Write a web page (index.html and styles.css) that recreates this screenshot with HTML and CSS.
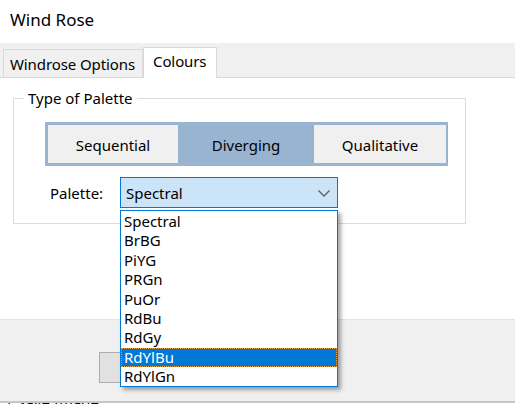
FILE: index.html
```html
<!DOCTYPE html>
<html>
<head>
<meta charset="utf-8">
<link rel="stylesheet" href="styles.css">
</head>
<body>
<div class="window">
  <div class="titlebar">Wind Rose</div>
  <div class="tabstrip">
    <div class="tab">Windrose Options</div>
    <div class="tab active">Colours</div>
  </div>
  <div class="page">
    <fieldset class="group">
      <legend class="legend">Type of Palette</legend>
      <div class="segments">
        <div class="seg">Sequential</div>
        <div class="seg selected">Diverging</div>
        <div class="seg">Qualitative</div>
      </div>
      <div class="palette-row">
        <span class="plabel">Palette:</span>
        <div class="combo">
          <span class="combo-text">Spectral</span>
          <svg class="chev" width="12" height="7" viewBox="0 0 12 7"><path d="M0.5 0.5 L6 6 L11.5 0.5" fill="none" stroke="#5f5f5f" stroke-width="1.3"/></svg>
        </div>
      </div>
    </fieldset>
  </div>
  <div class="footer">
    <div class="btn"></div>
  </div>
  <div class="bottomstrip"><span class="cut">| Save Image</span></div>

  <ul class="droplist">
    <li>Spectral</li>
    <li>BrBG</li>
    <li>PiYG</li>
    <li>PRGn</li>
    <li>PuOr</li>
    <li>RdBu</li>
    <li>RdGy</li>
    <li class="hl">RdYlBu</li>
    <li>RdYlGn</li>
  </ul>
</div>
</body>
</html>
```

FILE: styles.css
```css
* { box-sizing: border-box; }
html, body { margin: 0; padding: 0; }
body {
  width: 515px;
  height: 404px;
  overflow: hidden;
  background: #fff;
  font-family: "Noto Sans", "Liberation Sans", sans-serif;
  color: #000;
}
.window {
  position: relative;
  width: 515px;
  height: 404px;
}
.titlebar {
  height: 43px;
  padding: 8px 0 0 10px;
  font-size: 17px;
  line-height: 24px;
}
.tabstrip {
  height: 34px;
  background: #f0f0f0;
  display: flex;
  align-items: flex-end;
  padding-left: 3px;
  font-size: 15px;
}
.tab {
  height: 28px;
  width: 140px;
  border: 1px solid #d9d9d9;
  border-bottom: none;
  background: #f0f0f0;
  padding: 4px 0 0 6px;
  line-height: 20px;
  letter-spacing: -0.1px;
}
.tab.active {
  width: 74px;
  height: 31px;
  background: #fff;
  padding: 3px 0 0 9px;
  margin-bottom: -1px;
  position: relative;
}
.page {
  height: 242px;
  background: #fff;
  border-top: 1px solid #d9d9d9;
  padding: 10px 0 0 13px;
  font-size: 15px;
}
.group {
  width: 453px;
  height: 136px;
  margin: 0;
  border: 1px solid #dcdcdc;
  padding: 0;
}
.legend {
  margin-left: 10px;
  padding: 0 4px 0 4px;
  line-height: 20px;
}
.segments {
  margin: 14px 0 0 31px;
  width: 403px;
  height: 44px;
  background: #99b4d1;
  padding: 3px 2px 3px 3px;
  display: flex;
}
.seg {
  height: 38px;
  background: #f0f0f0;
  display: flex;
  align-items: center;
  justify-content: center;
  width: 130px;
  padding-top: 1px;
}
.seg.selected {
  width: 136px;
  background: #99b4d1;
}
.seg:last-child { width: 132px; }
.palette-row {
  display: flex;
  align-items: center;
  margin-top: 11px;
}
.plabel {
  margin-left: 36px;
  width: 70px;
}
.combo {
  width: 218px;
  height: 31px;
  background: #cce4f7;
  border: 1px solid #0078d7;
  display: flex;
  align-items: center;
  justify-content: space-between;
  padding: 0 7px 0 5px;
}
.chev { margin-top: 1px; }
.footer {
  height: 82px;
  background: #f0f0f0;
  border-top: 1px solid #e3e3e3;
  padding: 32px 0 0 99px;
}
.btn {
  width: 200px;
  height: 31px;
  background: #e1e1e1;
  border: 1px solid #adadad;
}
.bottomstrip {
  height: 10px;
  border-top: 2px solid #c6c6c6;
  background: #fff;
  overflow: hidden;
  font-size: 15px;
}
.cut {
  display: block;
  margin-top: -8px;
  padding-left: 5px;
  line-height: 14px;
}
.droplist {
  position: absolute;
  left: 120px;
  top: 210px;
  width: 218px;
  height: 177px;
  margin: 0;
  padding: 1px 0 0 0;
  list-style: none;
  background: #fff;
  border: 1px solid #0078d7;
  box-shadow: 3px 3px 4px rgba(0,0,0,0.35);
  font-size: 15px;
}
.droplist li {
  height: 19.4px;
  line-height: 19px;
  padding-left: 3px;
}
.droplist li.hl {
  background: #0078d7;
  color: #fff;
  outline: 1px dotted #e39a44;
  outline-offset: -1px;
}
```
